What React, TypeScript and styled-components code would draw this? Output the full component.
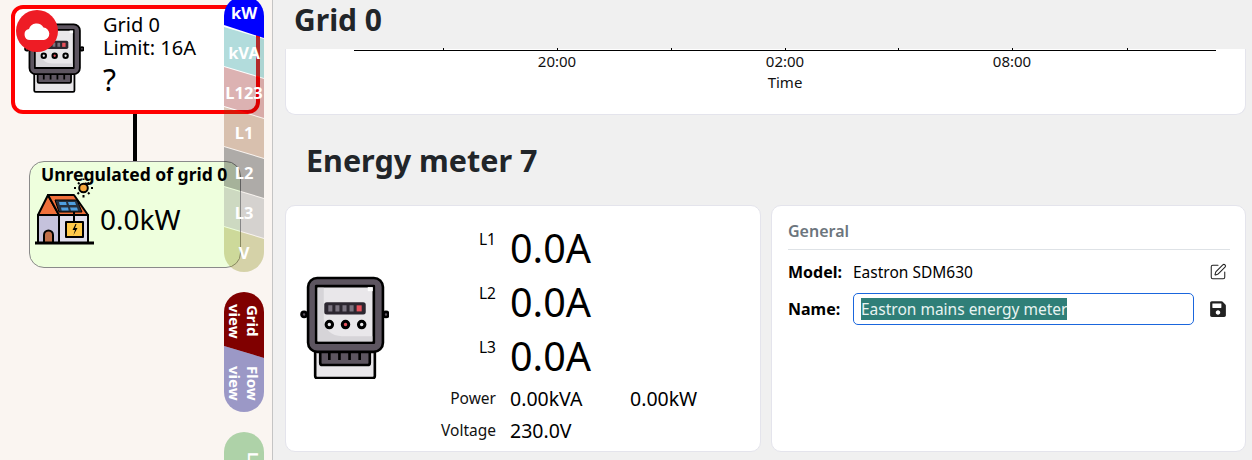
import React, { useEffect, useRef } from 'react';
import styled, { createGlobalStyle } from 'styled-components';
import { SquarePen } from 'lucide-react';
import { FaSave } from 'react-icons/fa';

const GlobalStyle = createGlobalStyle`
  html, body {
    margin: 0;
    height: 100%;
    overflow: hidden;
    font-family: "Noto Sans", "Open Sans", sans-serif;
    color: #000;
  }
  * { box-sizing: border-box; }
`;

const AppContainer = styled.div`
  display: grid;
  grid-template-columns: 273px 1fr;
  height: 100vh;
  overflow: hidden;
  background: #f0f0f0;
`;

const Sidebar = styled.aside`
  position: relative;
  display: flex;
  flex-direction: column;
  align-items: flex-start;
  padding: 5px 0 0 11px;
  background: #faf5f1;
  border-right: 1px solid #c4c4c4;
  overflow: hidden;
`;

const GridCard = styled.div`
  position: relative;
  display: flex;
  align-items: flex-start;
  width: 249px;
  height: 109px;
  padding: 14px 0 0 9px;
  background: #fff;
  border: 4px solid #ff0000;
  border-radius: 12px;
`;

const CloudBadge = styled.div`
  position: absolute;
  left: 1px;
  top: 1px;
  width: 42px;
  height: 42px;
  display: flex;
  align-items: center;
  justify-content: center;
  border-radius: 50%;
  background: #ee1c25;
`;

const GridInfo = styled.div`
  margin: -10px 0 0 19px;
  font-size: 20px;
  line-height: 23px;
`;

const Unknown = styled.div`
  margin-top: 5px;
  font-size: 30px;
  line-height: 32px;
`;

const Connector = styled.div`
  width: 4px;
  height: 47px;
  margin-left: 122px;
  background: #000;
`;

const LoadCard = styled.div`
  width: 212px;
  height: 107px;
  margin-left: 18px;
  padding: 2px 0 0 11px;
  background: #eeffdd;
  border: 1px solid #8a8a8a;
  border-radius: 15px;
`;

const LoadTitle = styled.div`
  font-size: 17.5px;
  line-height: 20px;
  font-weight: 700;
  white-space: nowrap;
`;

const LoadBody = styled.div`
  display: flex;
  align-items: center;
  gap: 5px;
  margin: -3px 0 0 -6px;
`;

const LoadValue = styled.div`
  font-size: 28px;
  line-height: 32px;
  margin-top: 11px;
`;

const TabRail = styled.div`
  position: absolute;
  left: 224px;
  top: -4px;
  width: 40px;
  display: flex;
  flex-direction: column;
`;

const Segment = styled.div<{ $bg: string; $first?: boolean; $last?: boolean }>`
  height: ${(p) => (p.$first ? '42px' : p.$last ? '45px' : '51px')};
  margin-top: ${(p) => (p.$first ? '0' : '-11px')};
  padding-top: ${(p) => (p.$last ? '6px' : '0')};
  padding-bottom: ${(p) => (p.$first ? '9px' : '0')};
  display: flex;
  align-items: center;
  justify-content: center;
  background: ${(p) => p.$bg};
  color: #fff;
  font-size: 16.5px;
  font-weight: 700;
  white-space: nowrap;
  border-radius: ${(p) => (p.$first ? '20px 20px 0 0' : p.$last ? '0 0 20px 20px' : '0')};
  clip-path: ${(p) =>
    p.$first
      ? 'polygon(0 0, 100% 0, 100% 100%, 0 calc(100% - 13px))'
      : p.$last
        ? 'polygon(0 0, 100% 12px, 100% 100%, 0 100%)'
        : 'polygon(0 0, 100% 12px, 100% 100%, 0 calc(100% - 12px))'};
`;

const ViewPill = styled.div<{ $bg: string; $first?: boolean }>`
  height: 66px;
  margin-top: ${(p) => (p.$first ? '20px' : '-12px')};
  padding-top: ${(p) => (p.$first ? '0' : '8px')};
  padding-bottom: ${(p) => (p.$first ? '8px' : '0')};
  display: flex;
  align-items: center;
  justify-content: center;
  writing-mode: vertical-rl;
  background: ${(p) => p.$bg};
  color: #fff;
  font-size: 15px;
  line-height: 18px;
  font-weight: 700;
  text-align: center;
  border-radius: ${(p) => (p.$first ? '20px 20px 0 0' : '0 0 20px 20px')};
  clip-path: ${(p) =>
    p.$first
      ? 'polygon(0 0, 100% 0, 100% 100%, 0 calc(100% - 12px))'
      : 'polygon(0 0, 100% 12px, 100% 100%, 0 100%)'};
`;

const LegendPill = styled.div`
  height: 80px;
  margin-top: 20px;
  padding-top: 16px;
  display: flex;
  justify-content: center;
  writing-mode: vertical-rl;
  background: rgba(0, 128, 0, 0.3);
  color: #fff;
  font-size: 15px;
  font-weight: 700;
  border-radius: 20px;
`;

const Main = styled.main`
  display: flex;
  flex-direction: column;
  padding: 0 6px 0 12px;
  min-width: 0;
`;

const PageHeader = styled.header`
  height: 49px;
  flex: none;
  padding: 0 0 11px 9px;
  display: flex;
  align-items: center;
`;

const PageTitle = styled.h1`
  margin: 0;
  font-size: 30px;
  font-weight: 700;
  color: #212529;
`;

const ChartCard = styled.section`
  height: 66px;
  flex: none;
  background: #fff;
  border: 1px solid #e4e4ec;
  border-top: none;
  border-radius: 0 0 10px 10px;
`;

const ChartSvg = styled.svg`
  display: block;
  overflow: visible;
  font-family: "Noto Sans", sans-serif;
  font-size: 15px;
`;

const SectionTitle = styled.h2`
  margin: 0;
  height: 90px;
  flex: none;
  padding: 0 0 0 21px;
  display: flex;
  align-items: center;
  font-size: 30.5px;
  font-weight: 700;
  color: #212529;
`;

const DetailGrid = styled.div`
  display: grid;
  grid-template-columns: 476px 475px;
  column-gap: 10px;
  height: 247px;
  flex: none;
`;

const Card = styled.section`
  background: #fff;
  border: 1px solid #e4e4ec;
  border-radius: 10px;
`;

const MeterCard = styled(Card)`
  display: flex;
  align-items: flex-start;
  padding: 15px 0 0 14px;
`;

const MeterIconSlot = styled.div`
  width: 89px;
  flex: none;
  margin-top: 55px;
`;

const Readings = styled.div`
  display: grid;
  grid-template-columns: 107px 106px auto;
  column-gap: 14px;
`;

const PhaseLabel = styled.div`
  grid-column: 1;
  height: 54px;
  padding-top: 8px;
  text-align: right;
  font-size: 15.5px;
  line-height: 20px;
`;

const PhaseValue = styled.div`
  grid-column: 2 / 4;
  height: 54px;
  font-size: 39.5px;
  line-height: 54px;
  white-space: nowrap;
`;

const SmallLabel = styled.div`
  grid-column: 1;
  height: 32px;
  text-align: right;
  font-size: 15.5px;
  line-height: 30px;
  color: #111;
`;

const SmallValue = styled.div`
  height: 32px;
  font-size: 19.5px;
  line-height: 32px;
  white-space: nowrap;
`;

const GeneralCard = styled(Card)`
  padding: 15px 15px 0 16px;
`;

const GeneralTitle = styled.div`
  height: 29px;
  font-size: 16px;
  line-height: 20px;
  font-weight: 600;
  color: #6c757d;
  border-bottom: 1px solid #dee2e6;
`;

const FieldRow = styled.div`
  display: grid;
  grid-template-columns: 65px 341px 1fr;
  align-items: center;
  min-height: 32px;
  margin-top: 6px;
  font-size: 15.5px;

  & + & {
    margin-top: 5px;
  }
`;

const FieldLabel = styled.span`
  font-size: 16px;
  font-weight: 700;
`;

const IconButton = styled.button`
  justify-self: end;
  display: flex;
  padding: 0;
  margin-right: 3px;
  border: none;
  background: none;
  color: #222;
`;

const NameInput = styled.input`
  height: 32px;
  padding: 0 7px;
  font: inherit;
  color: #000;
  background: #fff;
  border: 1px solid #1a66dd;
  border-radius: 5px;
  outline: none;

  &::selection {
    background: #2f7f78;
    color: #e8f4f2;
  }
`;

const MeterIcon: React.FC<{ width: number }> = ({ width }) => (
  <svg width={width} viewBox="0 0 88 102" style={{ display: 'block', flex: 'none' }}>
    <g stroke="#000" strokeWidth="2.6" strokeLinejoin="round">
      <circle cx="4" cy="38" r="2.5" fill="#5d5560" />
      <circle cx="85" cy="38" r="2.5" fill="#5d5560" />
      <rect x="15" y="70" width="59" height="31" rx="2" fill="#e9e7ea" />
      <rect x="20" y="70" width="49" height="18" rx="2" fill="#5d5560" />
      <path d="M29 76v7M39 76v7M49 76v7M59 76v7" fill="none" />
      <rect x="8" y="2" width="74" height="73" rx="9" fill="#5d5560" />
      <rect x="16" y="10" width="57" height="56" fill="#e9e7ea" />
    </g>
    <path d="M17.5 11.5h6v31c0 10 8 17 18 17h30v5h-54z" fill="#d6d4d8" />
    <rect x="67" y="11" width="5" height="4" fill="#fff" />
    <rect x="24" y="26" width="41" height="12" rx="2.5" fill="#2c2730" />
    <path d="M28 29h4v6h-4zM35 29h4v6h-4zM42 29h4v6h-4zM49 29h4v6h-4z" fill="#7b7480" />
    <rect x="56" y="29" width="5" height="6" fill="#e8505b" />
    <g stroke="#000" strokeWidth="3">
      <circle cx="29" cy="48" r="3.2" fill="#e9e7ea" />
      <circle cx="45" cy="48" r="3.2" fill="#e8505b" />
      <circle cx="61" cy="48" r="3.2" fill="#e9e7ea" />
    </g>
  </svg>
);

const HouseIcon: React.FC = () => (
  <svg width={60} height={65} viewBox="0 0 60 65" style={{ display: 'block', flex: 'none', overflow: 'visible' }}>
    <g stroke="#000" strokeWidth="2" strokeLinejoin="round">
      <path d="M3 34h21v28H3z" fill="#c5c2dc" />
      <path d="M24 34h29v28H24z" fill="#e0deed" />
      <path d="M3 34L13 14l11 20z" fill="#f0703a" />
      <path d="M13 14h26l14 20H24z" fill="#f0703a" />
      <path d="M20 19h22l5 12H24z" fill="#26303e" strokeWidth="1" />
      <path d="M9 62v-8a4.500 4.500 0 0 1 9 0v8z" fill="#c0704a" />
      <path d="M31 41h17v15H31z" fill="#ffc94a" />
      <path d="M39 31v10" fill="none" />
    </g>
    <path d="M24 21h7l.7 3h-7zM33 21h7l1 3h-7zM26 26.500h7l.7 3h-7zM35 26.500h7l1 3h-7z" fill="#4f9ee0" />
    <path d="M40.500 43l-3 6h2.500l-1.500 5 4-7h-2.500l1.500-4z" fill="#000" />
    <path d="M0 62h59" stroke="#000" strokeWidth="3" />
    <circle cx="48.500" cy="7" r="4.300" fill="#f7a83c" stroke="#000" strokeWidth="2" />
    <path
      d="M48.500 -2.500v1.500M39 7h2M56 7h2M42.500 13l1.500-1.500M54.500 13l-1.500-1.500M48.500 14v2.500M54 1.500l-1.500 1.500M43 1.500l1.500 1.500"
      stroke="#000"
      strokeWidth="2"
      fill="none"
    />
  </svg>
);

const tickXs = [443, 557, 671, 785, 898, 1012, 1127];
const tickLabels: Record<number, string> = { 557: '20:00', 785: '02:00', 1012: '08:00' };

const Chart: React.FC = () => (
  <ChartSvg width={959} height={65} viewBox="286 49 959 65">
    <path d="M354 50.500H1216" stroke="#000" strokeWidth="1" />
    {tickXs.map((x) => (
      <path key={x} d={`M${x + 0.5} 48V50`} stroke="#000" strokeWidth="1" />
    ))}
    {tickXs
      .filter((x) => tickLabels[x])
      .map((x) => (
        <text key={x} x={x} y={67} textAnchor="middle" fill="#111">
          {tickLabels[x]}
        </text>
      ))}
    <text x={785} y={88} textAnchor="middle" fill="#111">
      Time
    </text>
  </ChartSvg>
);

const App: React.FC = () => {
  const nameRef = useRef<HTMLInputElement>(null);

  useEffect(() => {
    nameRef.current?.focus();
    nameRef.current?.select();
  }, []);

  return (
    <AppContainer>
      <GlobalStyle />
      <Sidebar>
        <GridCard>
          <MeterIcon width={60} />
          <CloudBadge>
            <svg width="26" height="20" viewBox="0 0 26 20">
              <path
                d="M6 19a5.500 5.500 0 0 1-1-10.900A8 8 0 0 1 19.500 6.500 6.300 6.300 0 0 1 20 19z"
                fill="#fff"
              />
            </svg>
          </CloudBadge>
          <GridInfo>
            <div>Grid 0</div>
            <div>Limit: 16A</div>
            <Unknown>?</Unknown>
          </GridInfo>
        </GridCard>
        <Connector />
        <LoadCard>
          <LoadTitle>Unregulated of grid 0</LoadTitle>
          <LoadBody>
            <HouseIcon />
            <LoadValue>0.0kW</LoadValue>
          </LoadBody>
        </LoadCard>
        <TabRail>
          <Segment $first $bg="#0000ff">kW</Segment>
          <Segment $bg="rgba(0, 140, 140, 0.3)">kVA</Segment>
          <Segment $bg="rgba(139, 0, 0, 0.3)">L123</Segment>
          <Segment $bg="rgba(139, 69, 19, 0.3)">L1</Segment>
          <Segment $bg="rgba(0, 0, 0, 0.3)">L2</Segment>
          <Segment $bg="rgba(128, 128, 128, 0.3)">L3</Segment>
          <Segment $last $bg="rgba(128, 128, 0, 0.3)">V</Segment>
          <ViewPill $first $bg="#800000">Grid view</ViewPill>
          <ViewPill $bg="rgba(0, 0, 128, 0.38)">Flow view</ViewPill>
          <LegendPill>Legend</LegendPill>
        </TabRail>
      </Sidebar>
      <Main>
        <PageHeader>
          <PageTitle>Grid 0</PageTitle>
        </PageHeader>
        <ChartCard>
          <Chart />
        </ChartCard>
        <SectionTitle>Energy meter 7</SectionTitle>
        <DetailGrid>
          <MeterCard>
            <MeterIconSlot>
              <MeterIcon width={89} />
            </MeterIconSlot>
            <Readings>
              <PhaseLabel>L1</PhaseLabel>
              <PhaseValue>0.0A</PhaseValue>
              <PhaseLabel>L2</PhaseLabel>
              <PhaseValue>0.0A</PhaseValue>
              <PhaseLabel>L3</PhaseLabel>
              <PhaseValue>0.0A</PhaseValue>
              <SmallLabel>Power</SmallLabel>
              <SmallValue>0.00kVA</SmallValue>
              <SmallValue>0.00kW</SmallValue>
              <SmallLabel>Voltage</SmallLabel>
              <SmallValue>230.0V</SmallValue>
            </Readings>
          </MeterCard>
          <GeneralCard>
            <GeneralTitle>General</GeneralTitle>
            <FieldRow>
              <FieldLabel>Model:</FieldLabel>
              <span>Eastron SDM630</span>
              <IconButton aria-label="Edit">
                <SquarePen size={18} strokeWidth={1.4} />
              </IconButton>
            </FieldRow>
            <FieldRow>
              <FieldLabel>Name:</FieldLabel>
              <NameInput ref={nameRef} defaultValue="Eastron mains energy meter" />
              <IconButton aria-label="Save">
                <FaSave size={18} />
              </IconButton>
            </FieldRow>
          </GeneralCard>
        </DetailGrid>
      </Main>
    </AppContainer>
  );
};

export default App;
